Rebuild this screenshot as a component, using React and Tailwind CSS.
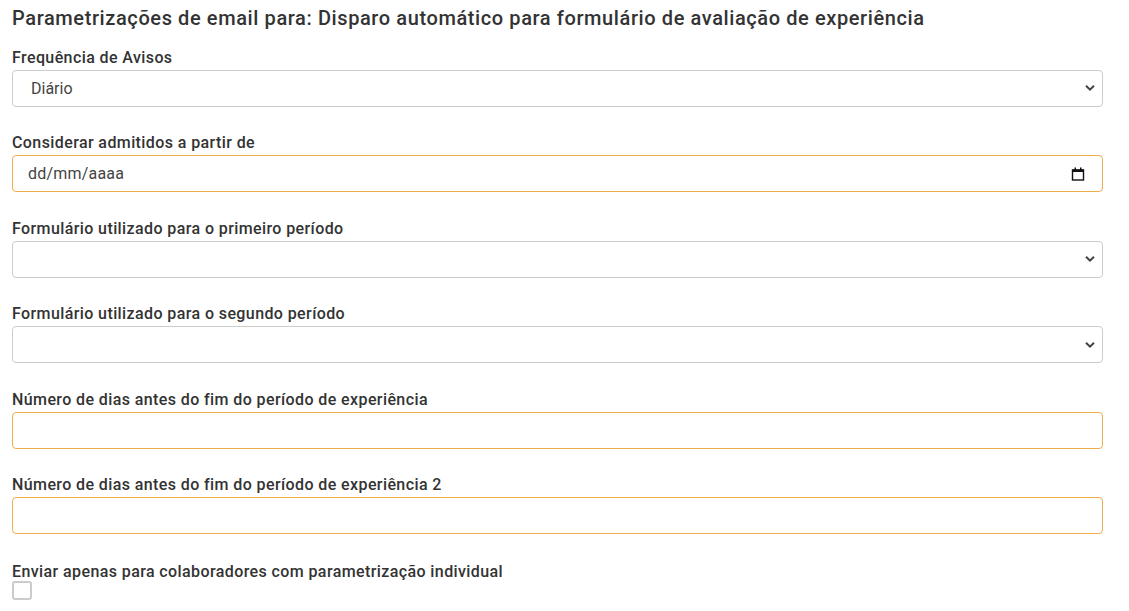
const fields = [
  { label: 'Frequência de Avisos', kind: 'select', value: 'Diário' },
  { label: 'Considerar admitidos a partir de', kind: 'date' },
  { label: 'Formulário utilizado para o primeiro período', kind: 'select' },
  { label: 'Formulário utilizado para o segundo período', kind: 'select' },
  { label: 'Número de dias antes do fim do período de experiência', kind: 'number' },
  { label: 'Número de dias antes do fim do período de experiência 2', kind: 'number' },
];

function Chevron() {
  return (
    <svg width="10" height="7" viewBox="0 0 10 7" className="absolute right-[7px] top-1/2 -translate-y-1/2">
      <path d="M1 1.2 L5 5.2 L9 1.2" fill="none" stroke="#444" strokeWidth="2" />
    </svg>
  );
}

function CalendarIcon() {
  return (
    <svg width="14" height="14" viewBox="0 0 14 14" className="absolute right-[17px] top-1/2 -translate-y-1/2">
      <rect x="1.5" y="3" width="11" height="10" fill="none" stroke="#111" strokeWidth="1.4" />
      <rect x="1" y="2.5" width="12" height="2.5" fill="#111" />
      <rect x="3.5" y="0.5" width="1.5" height="3" fill="#111" />
      <rect x="9" y="0.5" width="1.5" height="3" fill="#111" />
    </svg>
  );
}

function Field({ field }) {
  const orange = field.kind === 'date' || field.kind === 'number';
  return (
    <div className="mb-[24.5px]">
      <label className="block h-[22px] text-[16px] leading-[24px] font-medium tracking-[0.4px] text-[#333]">
        {field.label}
      </label>
      <div
        className={`relative mt-[2px] h-[37px] w-[1091px] rounded-[4px] border bg-white ${
          orange ? 'border-[#f0ad4e]' : 'border-[#ccc]'
        }`}
      >
        {field.kind === 'select' && (
          <>
            <div className="pl-[18px] text-[16px] leading-[35px] text-[#444]">{field.value}</div>
            <Chevron />
          </>
        )}
        {field.kind === 'date' && (
          <>
            <div className="pl-[15px] text-[16px] leading-[35px] text-[#444] tracking-[0.2px]">dd/mm/aaaa</div>
            <CalendarIcon />
          </>
        )}
      </div>
    </div>
  );
}

export default function App() {
  return (
    <div className="min-h-screen bg-white px-3 pt-[6px] font-['Roboto',sans-serif]">
      <h1 className="mb-[15.5px] h-[24px] text-[20px] leading-[24px] font-medium tracking-[0.6px] text-[#333]">
        Parametrizações de email para: Disparo automático para formulário de avaliação de experiência
      </h1>
      {fields.map((f) => (
        <Field key={f.label} field={f} />
      ))}
      <div>
        <label className="block h-[22px] text-[16px] leading-[26px] font-medium tracking-[0.4px] text-[#333]">
          Enviar apenas para colaboradores com parametrização individual
        </label>
        <div className="mt-0 h-[19px] w-[20px] rounded-[3px] border-2 border-[#ccc] bg-white" />
      </div>
    </div>
  );
}
